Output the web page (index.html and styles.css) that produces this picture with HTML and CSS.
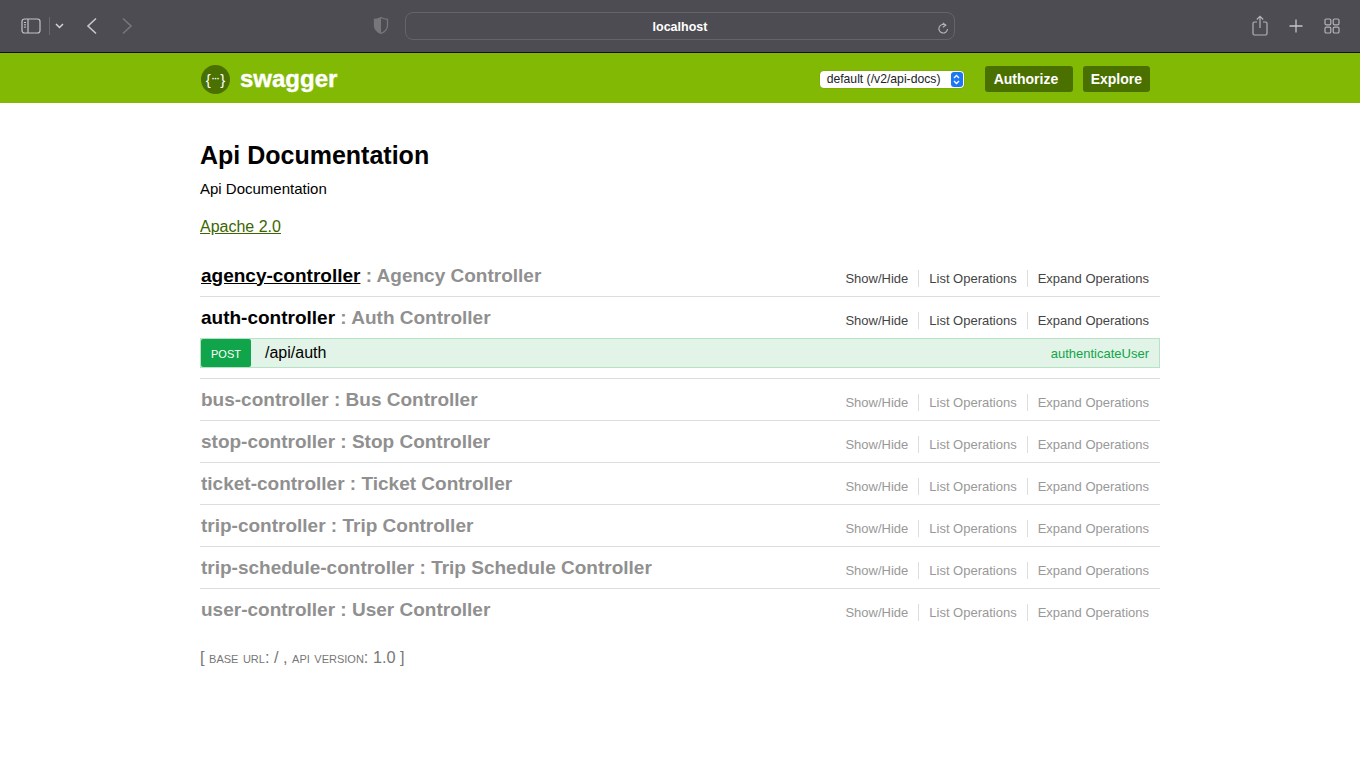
FILE: index.html
```html
<!DOCTYPE html>
<html>

<head>
    <title>Swagger UI</title>
    <link rel="stylesheet" href="styles.css">
</head>

<body>
    <div class="browserBar">
        <div class="barLeft">
            <svg class="sidebarIcon" width="20" height="16" viewBox="0 0 20 16" fill="none" stroke="#c4c4c6" stroke-width="1.2">
                <rect x="1" y="1" width="18" height="14" rx="2.5"></rect>
                <path d="M7 1v14"></path>
                <path d="M3 4.5h2M3 6.8h2M3 9.1h2" stroke-width="1"></path>
            </svg>
            <span class="barDivider"></span>
            <svg class="chevronDown" width="9" height="6" viewBox="0 0 9 6" fill="none" stroke="#d4d4d6" stroke-width="1.5">
                <path d="M1 1l3.500 3.500L8 1"></path>
            </svg>
            <svg class="navBack" width="12" height="18" viewBox="0 0 12 18" fill="none" stroke="#c8c8ca" stroke-width="1.6">
                <path d="M10 1.500L2 9l8 7.500"></path>
            </svg>
            <svg class="navForward" width="12" height="18" viewBox="0 0 12 18" fill="none" stroke="#77777b" stroke-width="1.6">
                <path d="M2 1.500L10 9l-8 7.500"></path>
            </svg>
        </div>
        <svg class="shieldIcon" width="16" height="19" viewBox="0 0 16 19">
            <path d="M8 1.500c2 1.200 4 1.700 6.500 1.900v6.100c0 3.700-2.700 6.300-6.500 8-3.800-1.700-6.500-4.300-6.500-8V3.400C4 3.200 6 2.700 8 1.500z" fill="none" stroke="#77777b" stroke-width="1.300"></path>
            <path d="M8 1.500v16c-3.800-1.700-6.500-4.300-6.500-8V3.400C4 3.200 6 2.700 8 1.500z" fill="#77777b"></path>
        </svg>
        <div class="addressBar">
            <span class="addressText">localhost</span>
            <svg class="reloadIcon" width="12" height="13" viewBox="0 0 12 13" fill="none" stroke="#b4b4b6" stroke-width="1.100">
                <path d="M8.800 3.300A4.300 4.300 0 1 0 10.500 7"></path>
                <path d="M5.800 0.800l3 2.500-3 1.900"></path>
            </svg>
        </div>
        <div class="barRight">
            <svg width="16" height="21" viewBox="0 0 16 21" fill="none" stroke="#b4b4b6" stroke-width="1.200">
                <path d="M5 7H2.500A1.500 1.500 0 0 0 1 8.500v10A1.500 1.500 0 0 0 2.500 20h11a1.500 1.500 0 0 0 1.500-1.500v-10A1.500 1.500 0 0 0 13.500 7H11"></path>
                <path d="M8 13V1.500M4.800 4.500L8 1.300l3.200 3.200"></path>
            </svg>
            <svg width="14" height="14" viewBox="0 0 14 14" fill="none" stroke="#c4c4c6" stroke-width="1.300">
                <path d="M7 0.500v13M0.500 7h13"></path>
            </svg>
            <svg width="16" height="16" viewBox="0 0 16 16" fill="none" stroke="#b4b4b6" stroke-width="1.200">
                <rect x="1" y="1" width="5.800" height="5.800" rx="1.300"></rect>
                <rect x="9.200" y="1" width="5.800" height="5.800" rx="1.300"></rect>
                <rect x="1" y="9.200" width="5.800" height="5.800" rx="1.300"></rect>
                <rect x="9.200" y="9.200" width="5.800" height="5.800" rx="1.300"></rect>
            </svg>
        </div>
    </div>

    <div class="header">
        <div class="wrap headerInner">
            <div class="logo">
                <span class="logoBadge">{<span class="logoDots">···</span>}</span>
                <span class="logoText">swagger</span>
            </div>
            <div class="headerTools">
                <div class="specSelect">
                    <span>default (/v2/api-docs)</span>
                    <span class="selectArrows">
                        <svg width="7" height="11" viewBox="0 0 7 11" fill="none" stroke="#fff" stroke-width="1.300">
                            <path d="M1 4l2.500-2.500L6 4M1 7l2.500 2.500L6 7"></path>
                        </svg>
                    </span>
                </div>
                <a class="headerBtn authorizeBtn">Authorize</a>
                <a class="headerBtn">Explore</a>
            </div>
        </div>
    </div>

    <div class="wrap content">
        <h1 class="apiTitle">Api Documentation</h1>
        <p class="apiDescription">Api Documentation</p>
        <a class="license">Apache 2.0</a>

        <div class="resources">
            <div class="resource active">
                <h2><span class="resName hovered">agency-controller</span> <span class="resDesc">: Agency Controller</span></h2>
                <ul class="resActions">
                    <li>Show/Hide</li>
                    <li>List Operations</li>
                    <li>Expand Operations</li>
                </ul>
            </div>
            <div class="resource active">
                <h2><span class="resName">auth-controller</span> <span class="resDesc">: Auth Controller</span></h2>
                <ul class="resActions">
                    <li>Show/Hide</li>
                    <li>List Operations</li>
                    <li>Expand Operations</li>
                </ul>
            </div>
            <div class="operation">
                <span class="opMethod">POST</span>
                <span class="opPath">/api/auth</span>
                <span class="opName">authenticateUser</span>
            </div>
            <div class="resource">
                <h2>bus-controller : Bus Controller</h2>
                <ul class="resActions">
                    <li>Show/Hide</li>
                    <li>List Operations</li>
                    <li>Expand Operations</li>
                </ul>
            </div>
            <div class="resource">
                <h2>stop-controller : Stop Controller</h2>
                <ul class="resActions">
                    <li>Show/Hide</li>
                    <li>List Operations</li>
                    <li>Expand Operations</li>
                </ul>
            </div>
            <div class="resource">
                <h2>ticket-controller : Ticket Controller</h2>
                <ul class="resActions">
                    <li>Show/Hide</li>
                    <li>List Operations</li>
                    <li>Expand Operations</li>
                </ul>
            </div>
            <div class="resource">
                <h2>trip-controller : Trip Controller</h2>
                <ul class="resActions">
                    <li>Show/Hide</li>
                    <li>List Operations</li>
                    <li>Expand Operations</li>
                </ul>
            </div>
            <div class="resource">
                <h2>trip-schedule-controller : Trip Schedule Controller</h2>
                <ul class="resActions">
                    <li>Show/Hide</li>
                    <li>List Operations</li>
                    <li>Expand Operations</li>
                </ul>
            </div>
            <div class="resource last">
                <h2>user-controller : User Controller</h2>
                <ul class="resActions">
                    <li>Show/Hide</li>
                    <li>List Operations</li>
                    <li>Expand Operations</li>
                </ul>
            </div>
        </div>

        <p class="apiInfo">[ base url: / , api version: 1.0 ]</p>
    </div>
</body>

</html>
```
FILE: styles.css
```css
* {
    padding: 0;
    margin: 0;
    box-sizing: border-box;
}

html,
body {
    height: 100%;
}

body {
    font-family: "Liberation Sans", Arial, sans-serif;
    background: #fff;
    color: #000;
    overflow: hidden;
}

.wrap {
    width: 960px;
    margin: 0 auto;
}

/* browser toolbar */
.browserBar {
    height: 53px;
    background: #4d4c52;
    border-bottom: 1px solid #111;
    display: flex;
    align-items: center;
    padding: 0 20px 1px 21px;
    position: relative;
}

.barLeft {
    display: flex;
    align-items: center;
}

.barDivider {
    width: 1px;
    height: 18px;
    background: #6a6a6e;
    margin-left: 8px;
}

.chevronDown {
    margin-left: 5px;
}

.navBack {
    margin-left: 22px;
}

.navForward {
    margin-left: 23px;
}

.shieldIcon {
    margin-left: 240px;
}

.addressBar {
    width: 550px;
    height: 28px;
    margin-left: 16px;
    border: 1px solid #65646a;
    border-radius: 8px;
    position: relative;
    display: flex;
    align-items: center;
    justify-content: center;
}

.addressText {
    color: #fff;
    font-size: 12.500px;
    font-weight: bold;
    padding-top: 2px;
}

.reloadIcon {
    position: absolute;
    right: 5px;
    top: 9px;
}

.barRight {
    margin-left: auto;
    display: flex;
    align-items: center;
    gap: 21px;
}

/* swagger header */
.header {
    height: 50px;
    background: #82b904;
}

.headerInner {
    height: 100%;
    display: flex;
    align-items: center;
    justify-content: space-between;
    padding-right: 10px;
    padding-top: 2px;
}

.logo {
    display: flex;
    align-items: center;
    padding-left: 1px;
}

.logoBadge {
    width: 29px;
    height: 29px;
    border-radius: 50%;
    background: #4a7000;
    color: #fff;
    font-size: 15px;
    display: flex;
    align-items: center;
    justify-content: center;
}

.logoDots {
    font-size: 9px;
    font-weight: bold;
    letter-spacing: -0.5px;
    margin: 0 1px;
}

.logoText {
    color: #fff;
    font-size: 24px;
    font-weight: bold;
    margin-left: 10px;
    -webkit-text-stroke: 0.4px #fff;
}

.headerTools {
    display: flex;
    align-items: center;
}

.specSelect {
    width: 144px;
    height: 17px;
    background: #fff;
    border-radius: 4px;
    box-shadow: 0 0 1px rgba(0, 0, 0, 0.4);
    padding: 0 1px 0 7px;
    font-size: 12.200px;
    color: #222;
    display: flex;
    align-items: center;
    justify-content: space-between;
}

.selectArrows {
    width: 12px;
    height: 15px;
    background: #1c78f2;
    border-radius: 3px;
    display: flex;
    align-items: center;
    justify-content: center;
}

.headerBtn {
    height: 26px;
    padding: 0 8px;
    background: #4a7000;
    border-radius: 3px;
    color: #fff;
    font-size: 14px;
    font-weight: bold;
    line-height: 26px;
    margin-left: 10px;
}

.authorizeBtn {
    width: 88px;
    padding-left: 9px;
    margin-left: 21px;
}

/* page body */
.content {
    padding-top: 35px;
}

.apiTitle {
    font-size: 25px;
    line-height: 34px;
}

.apiDescription {
    font-size: 15px;
    line-height: 18px;
    margin-top: 8px;
}

.license {
    display: inline-block;
    font-size: 16px;
    line-height: 20px;
    margin-top: 19px;
    color: #3b6600;
    text-decoration: underline;
}

.resources {
    margin-top: 18px;
}

.resource {
    height: 42px;
    border-bottom: 1px solid #ddd;
    display: flex;
    align-items: center;
    justify-content: space-between;
    padding-left: 1px;
}

.resource.last {
    border-bottom: none;
}

.resource h2 {
    font-size: 19px;
    line-height: 24px;
    color: #909090;
}

.resource.active .resName {
    color: #000;
}

.resName.hovered {
    text-decoration: underline;
}

.resActions {
    list-style: none;
    display: flex;
    font-size: 13px;
    color: #999;
    padding-top: 5px;
}

.resource.active .resActions {
    color: #444;
}

.resActions li {
    padding: 0 10px;
    line-height: 17px;
    border-right: 1px solid #ddd;
}

.resActions li:last-child {
    border-right: none;
    padding-right: 11px;
}

.resource:has(+ .operation) {
    border-bottom: none;
    height: 41px;
}

.operation {
    height: 30px;
    background: #e2f3e7;
    border: 1px solid #b8e2c6;
    display: flex;
    align-items: center;
    margin-bottom: 11px;
    position: relative;
}

.operation::after {
    content: "";
    position: absolute;
    left: -1px;
    right: -1px;
    bottom: -12px;
    height: 1px;
    background: #ddd;
}

.opMethod {
    width: 50px;
    height: 28px;
    background: #10a54a;
    border-radius: 2px;
    color: #fff;
    font-size: 11px;
    line-height: 30px;
    text-align: center;
}

.opPath {
    font-size: 16px;
    margin-left: 14px;
}

.opName {
    margin-left: auto;
    margin-right: 10px;
    font-size: 13px;
    color: #10a54a;
}

.apiInfo {
    margin-top: 16px;
    font-size: 16.300px;
    line-height: 20px;
    color: #777;
    font-variant: small-caps;
}
```
